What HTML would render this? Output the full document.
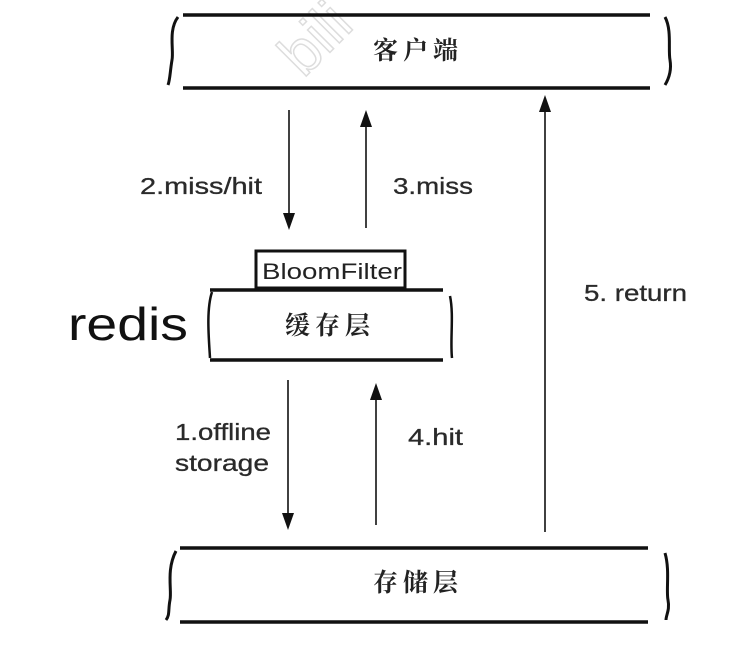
<!DOCTYPE html>
<html><head><meta charset="utf-8"><style>
html,body{margin:0;padding:0;background:#fff;width:754px;height:659px;overflow:hidden}
svg{display:block}
.l{font-family:"Liberation Sans",sans-serif;font-size:23px;fill:#2a2a2a;stroke:#2a2a2a;stroke-width:0.3}
.c{font-family:"Liberation Serif","Noto Serif CJK SC",serif;font-size:25px;fill:#222;font-weight:bold;letter-spacing:5px}
</style></head><body>
<svg width="754" height="659" viewBox="0 0 754 659">
<text x="275" y="70" transform="rotate(-45 300 40)" font-family="Liberation Sans" font-size="60" fill="none" stroke="#ddd" stroke-width="1.5">bili</text>
<g stroke="#111" fill="none" stroke-width="3.5">
<line x1="183" y1="15" x2="650" y2="15"/><line x1="183" y1="88" x2="650" y2="88"/>
<path d="M178 17 C168 30 174 50 172 60 C170 72 170 80 168 85" stroke-width="3"/>
<path d="M665 17 C672 30 668 50 670 60 C672 72 668 80 665 85" stroke-width="3"/>
<line x1="210" y1="290" x2="443" y2="290"/><line x1="210" y1="360" x2="443" y2="360"/>
<path d="M212 292 C206 310 209 340 210 358" stroke-width="2.5"/>
<path d="M450 296 C454 315 450 340 452 358" stroke-width="2.5"/>
<line x1="180" y1="548" x2="648" y2="548"/><line x1="180" y1="622" x2="648" y2="622"/>
<path d="M176 551 C166 570 172 590 170 600 C168 610 170 615 166 620" stroke-width="3"/>
<path d="M665 553 C670 570 666 590 668 600 C670 610 666 615 666 620" stroke-width="3"/>
</g>
<rect x="256" y="251" width="149" height="37" fill="#fff" stroke="#111" stroke-width="3"/>
<text x="262" y="279" font-family="Liberation Sans" font-size="22" fill="#222" textLength="140" lengthAdjust="spacingAndGlyphs">BloomFilter</text>
<g stroke="#111" stroke-width="1.6">
<line x1="289" y1="110" x2="289" y2="215"/>
<line x1="366" y1="228" x2="366" y2="125"/>
<line x1="545" y1="532" x2="545" y2="110"/>
<line x1="288" y1="380" x2="288" y2="515"/>
<line x1="376" y1="525" x2="376" y2="398"/>
</g>
<g fill="#111">
<path d="M283 213 L295 213 L289 230Z"/>
<path d="M360 127 L372 127 L366 110Z"/>
<path d="M539 112 L551 112 L545 95Z"/>
<path d="M282 513 L294 513 L288 530Z"/>
<path d="M370 400 L382 400 L376 383Z"/>
</g>
<text class="c" x="418" y="59" text-anchor="middle">客户端</text>
<text class="c" x="330" y="334" text-anchor="middle">缓存层</text>
<text class="c" x="418" y="591" text-anchor="middle">存储层</text>
<text x="68" y="340" font-family="Liberation Sans" font-size="46" fill="#111" textLength="120" lengthAdjust="spacingAndGlyphs">redis</text>
<text class="l" x="140" y="194" textLength="122" lengthAdjust="spacingAndGlyphs">2.miss/hit</text>
<text class="l" x="393" y="194" textLength="80" lengthAdjust="spacingAndGlyphs">3.miss</text>
<text class="l" x="584" y="301" textLength="103" lengthAdjust="spacingAndGlyphs">5. return</text>
<text class="l" x="175" y="440" textLength="96" lengthAdjust="spacingAndGlyphs">1.offline</text>
<text class="l" x="175" y="471" textLength="94" lengthAdjust="spacingAndGlyphs">storage</text>
<text class="l" x="408" y="445" textLength="55" lengthAdjust="spacingAndGlyphs">4.hit</text>
</svg>
</body></html>
